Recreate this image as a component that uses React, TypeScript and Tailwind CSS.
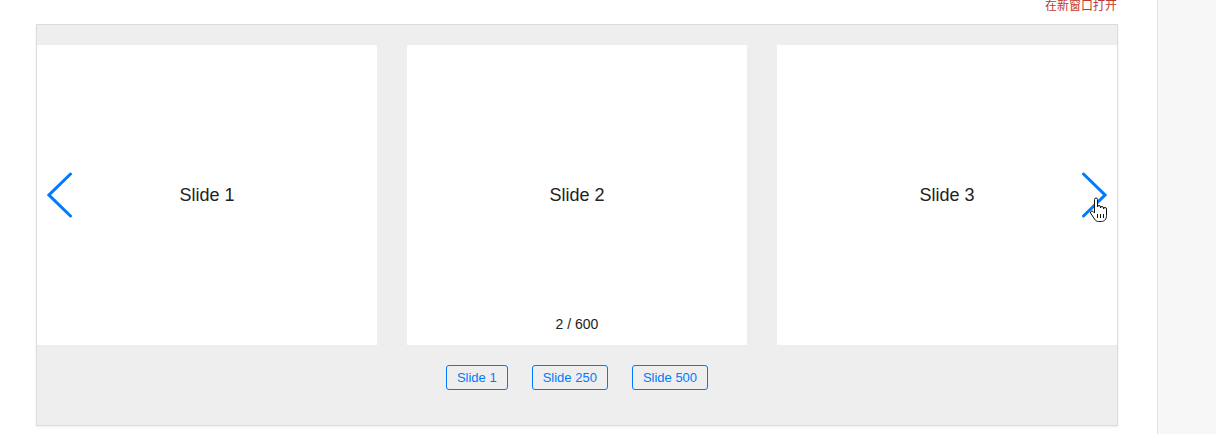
import React from "react";

const slides = ["Slide 1", "Slide 2", "Slide 3"];
const jumps = ["Slide 1", "Slide 250", "Slide 500"];

function Chevron({ dir }: { dir: "left" | "right" }) {
  const d = dir === "left" ? "M23.5 3 L2 24 L23.5 45" : "M2.5 3 L24 24 L2.5 45";
  return (
    <svg width="26" height="48" viewBox="0 0 26 48" fill="none">
      <path d={d} stroke="#007aff" strokeWidth="3" strokeLinecap="round" strokeLinejoin="miter" />
    </svg>
  );
}

function HandCursor() {
  return (
    <svg width="18" height="26" viewBox="0 0 18 26">
      <path
        d="M5.5 12 V2.5 a1.5 1.5 0 0 1 3 0 V10 a1.5 1.5 0 0 1 3 0 V11 a1.5 1.5 0 0 1 3 0 V12 a1.5 1.5 0 0 1 3 0 V18.5 c0 3.5 -2 6 -5 6 H9.5 c-2 0 -3 -1 -4 -2.5 L1.5 16 a1.5 1.5 0 0 1 2.5 -1.5 L5.5 16 Z"
        fill="#fff"
        stroke="#111"
        strokeWidth="1"
        strokeLinejoin="round"
      />
      <path d="M8.5 17 V21 M11.5 17 V21 M14.5 17 V21" stroke="#111" strokeWidth="1" />
    </svg>
  );
}

export default function App() {
  return (
    <div className="flex h-[434px] w-full bg-white font-['Liberation_Sans',Arial,sans-serif]">
      <div className="w-[1157px] shrink-0">
        <div className="ml-[36px] w-[1082px]">
          <div className="-mt-px h-[25px] pr-px text-right text-[12px] leading-[12px] text-[#c0392b] font-['Noto_Sans_CJK_SC',sans-serif]">
            在新窗口打开
          </div>
          <div className="border border-[#dcdcdc] bg-[#eeeeee] shadow-[0_1px_2px_rgba(0,0,0,0.08)]">
            <div className="relative mt-[20px]">
              <div className="flex gap-[30px]">
                {slides.map((s, i) => (
                  <div
                    key={s}
                    className="relative flex h-[300px] w-[340px] items-center justify-center bg-white text-[18px] text-[#222]"
                  >
                    {s}
                    {i === 1 && (
                      <div className="absolute bottom-[10px] left-0 right-0 text-center text-[14px] text-[#222]">
                        2 / 600
                      </div>
                    )}
                  </div>
                ))}
              </div>
              <div className="absolute left-[10px] top-[126px]">
                <Chevron dir="left" />
              </div>
              <div className="absolute right-[10px] top-[126px]">
                <Chevron dir="right" />
              </div>
              <div className="absolute left-[1052px] top-[152px]">
                <HandCursor />
              </div>
            </div>
            <div className="flex justify-center gap-[24px] pb-[35px] pt-[20px]">
              {jumps.map((j) => (
                <button
                  key={j}
                  className="rounded-[3px] border border-[#007aff] px-[10px] py-[4px] text-[13px] leading-[15px] text-[#007aff]"
                >
                  {j}
                </button>
              ))}
            </div>
          </div>
        </div>
      </div>
      <div className="flex-1 border-l border-[#e3e3e3] bg-[#f7f7f7]" />
    </div>
  );
}
